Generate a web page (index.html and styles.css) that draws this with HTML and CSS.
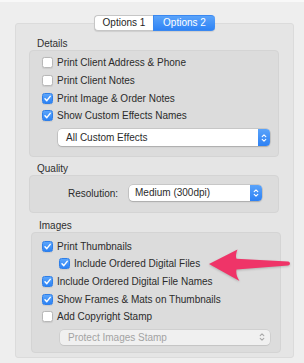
FILE: index.html
```html
<!DOCTYPE html>
<html>
	<head>
		<meta charset="utf-8">
		<link rel="stylesheet" href="styles.css">
	</head>
	<body>
		<div class="window">
			<div class="tabs">
				<span class="tab">Options 1</span>
				<span class="tab tab-active">Options 2</span>
			</div>
			<div class="panel">
				<div class="group-label">Details</div>
				<div class="group group-details">
					<div class="row"><span class="check"></span>Print Client Address &amp; Phone</div>
					<div class="row"><span class="check"></span>Print Client Notes</div>
					<div class="row"><span class="check check-on"><svg viewBox="0 0 11 11"><path d="M3 5.8 L4.8 7.6 L8.2 3.4"/></svg></span>Print Image &amp; Order Notes</div>
					<div class="row"><span class="check check-on"><svg viewBox="0 0 11 11"><path d="M3 5.8 L4.8 7.6 L8.2 3.4"/></svg></span>Show Custom Effects Names</div>
					<div class="popup popup-effects">
						<span class="popup-text">All Custom Effects</span>
						<span class="stepper"><svg viewBox="0 0 6 10"><path d="M1.2 3.6 L3 1.8 L4.8 3.6 M1.2 6.4 L3 8.2 L4.8 6.4"/></svg></span>
					</div>
				</div>

				<div class="group-label">Quality</div>
				<div class="group group-quality">
					<span class="field-label">Resolution:</span>
					<div class="popup popup-resolution">
						<span class="popup-text">Medium (300dpi)</span>
						<span class="stepper"><svg viewBox="0 0 6 10"><path d="M1.2 3.6 L3 1.8 L4.8 3.6 M1.2 6.4 L3 8.2 L4.8 6.4"/></svg></span>
					</div>
				</div>

				<div class="group-label group-label-images">Images</div>
				<div class="group group-images">
					<div class="row"><span class="check check-on"><svg viewBox="0 0 11 11"><path d="M3 5.8 L4.8 7.6 L8.2 3.4"/></svg></span>Print Thumbnails</div>
					<div class="row row-sub"><span class="check check-on"><svg viewBox="0 0 11 11"><path d="M3 5.8 L4.8 7.6 L8.2 3.4"/></svg></span>Include Ordered Digital Files</div>
					<div class="row"><span class="check check-on"><svg viewBox="0 0 11 11"><path d="M3 5.8 L4.8 7.6 L8.2 3.4"/></svg></span>Include Ordered Digital File Names</div>
					<div class="row"><span class="check check-on"><svg viewBox="0 0 11 11"><path d="M3 5.8 L4.8 7.6 L8.2 3.4"/></svg></span>Show Frames &amp; Mats on Thumbnails</div>
					<div class="row"><span class="check"></span>Add Copyright Stamp</div>
					<div class="popup popup-disabled">
						<span class="popup-text">Protect Images Stamp</span>
						<span class="stepper"><svg viewBox="0 0 6 10"><path d="M1.2 3.6 L3 1.8 L4.8 3.6 M1.2 6.4 L3 8.2 L4.8 6.4"/></svg></span>
					</div>
				</div>
			</div>
		</div>

		<!-- annotation arrow drawn over the dialog -->
		<svg class="arrow" viewBox="0 0 304 363">
			<path d="M209,264 L237.5,249.5 C236,253.5 235.5,256.5 236.5,258.8 L288,261.6 C290.6,262 290.6,265.2 288,265.6 L236.5,269.6 C235.8,272.8 236.8,276.8 239.5,281 Z"/>
		</svg>
	</body>
</html>
```

FILE: styles.css
```css
body {
	margin: 0;
	height: 361px;
	overflow: hidden;
	background: #eeeeee;
	border-top: 2px solid #f8f8f8;
	font-family: 'Liberation Sans', Arial, sans-serif;
	font-size: 10px;
	color: #2b2b2b;
}

.window {
	margin: 0 10px 0 15px;
	padding-top: 13px;
}

/* segmented control */
.tabs {
	display: flex;
	justify-content: center;
	position: relative;
	z-index: 1;
	height: 16px;
	margin-bottom: -8px;
}

.tab {
	width: 59px;
	height: 16px;
	box-sizing: border-box;
	line-height: 14px;
	text-align: center;
	background: #ffffff;
	border: 1px solid #c6c6c6;
	border-right: none;
	border-radius: 4px 0 0 4px;
	box-shadow: 0 1px 1px rgba(0,0,0,0.1);
	color: #1e1e1e;
}

.tab-active {
	width: 62px;
	background: linear-gradient(#5aa3fa, #2f83f5);
	border-color: #3a88f0;
	border-radius: 0 4px 4px 0;
	color: #ffffff;
}

.panel {
	background: #e5e5e5;
	border: 1px solid #dbdbdb;
	border-radius: 3px;
	padding: 14px 14px 4px 13px;
}

.group-label {
	line-height: 12px;
	padding-left: 8px;
	color: #2f2f2f;
}

.group-label-images {
	padding-left: 10px;
}

.group {
	background: #dcdcdc;
	border: 1px solid #d4d4d4;
	border-radius: 4px;
}

.group-details {
	padding: 3px 0 10px 12px;
	margin-bottom: 6px;
}

.group-quality {
	display: flex;
	align-items: center;
	gap: 11px;
	padding: 9px 0 11px 38px;
	margin-bottom: 7px;
}

.group-images {
	margin: 0 -2px 0 2px;
	padding: 4px 0 7px 10px;
}

/* checkbox rows */
.row {
	display: flex;
	align-items: center;
	gap: 4px;
	height: 17.7px;
	white-space: nowrap;
}

.row-sub {
	padding-left: 17px;
}

.check {
	display: inline-flex;
	width: 11px;
	height: 11px;
	box-sizing: border-box;
	flex: none;
	background: #ffffff;
	border: 1px solid #b8b8b8;
	border-radius: 2.5px;
	box-shadow: 0 0.5px 1px rgba(0,0,0,0.08);
}

.check-on {
	background: linear-gradient(#5ba5fb, #2c82f4);
	border-color: #2f7fe8;
}

.check svg {
	width: 11px;
	height: 11px;
	margin: -1px;
}

.check svg path {
	fill: none;
	stroke: #ffffff;
	stroke-width: 1.5;
	stroke-linecap: round;
	stroke-linejoin: round;
}

/* popup buttons */
.popup {
	display: flex;
	align-items: stretch;
	height: 17px;
	background: #ffffff;
	border-radius: 4px;
	box-shadow: 0 0 0 0.5px rgba(0,0,0,0.18), 0 1px 1.5px rgba(0,0,0,0.15);
}

.popup-effects {
	margin: 4.5px 8px 0 16px;
}

.popup-resolution {
	width: 133px;
	height: 16px;
}

.popup-text {
	flex: 1;
	line-height: 17px;
	padding-left: 8px;
	white-space: nowrap;
}

.popup-resolution .popup-text {
	line-height: 16px;
	padding-left: 6px;
}

.stepper {
	display: flex;
	align-items: center;
	justify-content: center;
	width: 12px;
	background: linear-gradient(#5aa3fa, #2d81f4);
	border-radius: 0 4px 4px 0;
}

.stepper svg {
	width: 6px;
	height: 10px;
}

.stepper svg path {
	fill: none;
	stroke: #ffffff;
	stroke-width: 1.1;
	stroke-linecap: round;
	stroke-linejoin: round;
}

.popup-disabled {
	height: 15px;
	margin: 4px 10px 0 18px;
	background: #f0f0f0;
	box-shadow: 0 0 0 0.5px rgba(0,0,0,0.1), 0 1px 1px rgba(0,0,0,0.06);
}

.popup-disabled .popup-text {
	line-height: 15px;
	color: #a3a3a3;
}

.popup-disabled .stepper {
	background: none;
	width: 16px;
}

.popup-disabled .stepper svg path {
	stroke: #a8a8a8;
}

.arrow {
	position: absolute;
	left: 0;
	top: 0;
	width: 304px;
	height: 363px;
	pointer-events: none;
}

.arrow path {
	fill: #ef3468;
	filter: drop-shadow(0 1px 1px rgba(0,0,0,0.2));
}
```
